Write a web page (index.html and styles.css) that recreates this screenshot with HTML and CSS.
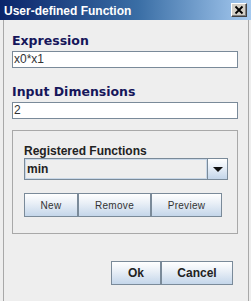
FILE: index.html
```html
<!DOCTYPE html>
<html>
<head>
<meta charset="utf-8">
<link rel="stylesheet" href="styles.css">
</head>
<body>
<div class="window">
  <div class="titlebar">
    <span class="title">User-defined Function</span>
    <span class="close">
      <svg width="14" height="12" viewBox="0 0 14 12">
        <path d="M3.5 2.5 L10.5 9.5 M10.5 2.5 L3.5 9.5" stroke="#000" stroke-width="1.8" fill="none"/>
      </svg>
    </span>
  </div>
  <div class="frame">
    <div class="label">Expression</div>
    <div class="field">x0*x1</div>
    <div class="label label-next">Input Dimensions</div>
    <div class="field">2</div>
    <div class="group">
      <div class="group-label">Registered Functions</div>
      <div class="combo">
        <span class="combo-value">min</span>
        <span class="combo-arrow"><span class="tri"></span></span>
      </div>
      <div class="btn-row">
        <button class="btn btn-small btn-new">New</button>
        <button class="btn btn-small btn-remove">Remove</button>
        <button class="btn btn-small btn-preview">Preview</button>
      </div>
    </div>
    <div class="actions">
      <button class="btn btn-main btn-ok">Ok</button>
      <button class="btn btn-main btn-cancel">Cancel</button>
    </div>
  </div>
</div>
</body>
</html>
```

FILE: styles.css
```css
html, body {
  margin: 0;
  padding: 0;
}
body {
  width: 251px;
  height: 301px;
  overflow: hidden;
  background: #eeeeee;
  font-family: "Liberation Sans", Arial, sans-serif;
}
.window {
  width: 251px;
  height: 301px;
}
.titlebar {
  height: 20px;
  box-sizing: border-box;
  padding: 0 4px 0 4px;
  background: linear-gradient(to right, #0a246a 0%, #3a6ea5 55%, #a6caf0 100%);
  display: flex;
  align-items: center;
  justify-content: space-between;
}
.title {
  color: #ffffff;
  font-weight: bold;
  font-size: 12px;
  line-height: 20px;
  padding-top: 1px;
}
.close {
  width: 16px;
  height: 14px;
  box-sizing: border-box;
  background: #d4d0c8;
  border-top: 1px solid #ffffff;
  border-left: 1px solid #ffffff;
  border-right: 1px solid #404040;
  border-bottom: 1px solid #404040;
  box-shadow: inset -1px -1px 0 #808080;
  display: flex;
}
.close svg {
  display: block;
}
.frame {
  height: 281px;
  box-sizing: border-box;
  margin: 0 2px 0 3px;
  border-left: 1px solid #a8a8a8;
  border-right: 1px solid #a8a8a8;
  padding: 13px 10px 0 8px;
}
.label {
  font-family: "DejaVu Sans", Verdana, sans-serif;
  font-weight: bold;
  font-size: 12.5px;
  line-height: 15px;
  height: 15px;
  color: #16165a;
  margin-bottom: 3px;
}
.label-next {
  margin-top: 16px;
}
.field {
  height: 17px;
  box-sizing: border-box;
  border: 1px solid #7a8a99;
  background: #ffffff;
  font-size: 12px;
  line-height: 14px;
  color: #333333;
  padding-left: 1px;
}
.group {
  margin-top: 11px;
  height: 104px;
  box-sizing: border-box;
  border: 1px solid #a8a8a8;
  padding: 13px 9px 0 11px;
}
.group-label {
  font-weight: bold;
  font-size: 12px;
  line-height: 14px;
  height: 14px;
  color: #222222;
}
.combo {
  height: 22px;
  box-sizing: border-box;
  border: 1px solid #7a8a99;
  display: flex;
}
.combo-value {
  flex: 1;
  box-shadow: inset 0 0 0 1px #c9d8e8;
  background: #eeeeee;
  font-weight: bold;
  font-size: 12px;
  line-height: 20px;
  color: #222222;
  padding-left: 2px;
}
.combo-arrow {
  width: 19px;
  border-left: 1px solid #7a8a99;
  background: linear-gradient(#ffffff 0%, #e6eef7 45%, #c3d5e9 100%);
  display: flex;
  align-items: center;
  justify-content: center;
}
.tri {
  width: 0;
  height: 0;
  border-left: 5px solid transparent;
  border-right: 5px solid transparent;
  border-top: 5px solid #111111;
}
.btn-row {
  margin-top: 13px;
  display: flex;
}
.btn {
  height: 24px;
  box-sizing: border-box;
  border: 1px solid #7a8a99;
  background: linear-gradient(#ffffff 0%, #eaf0f7 40%, #c4d6ea 100%);
  padding: 0;
  margin: 0;
  font-family: "Liberation Sans", Arial, sans-serif;
  color: #333333;
}
.btn-small {
  font-size: 10px;
  letter-spacing: 0.3px;
}
.btn-new { width: 54px; }
.btn-remove { width: 73px; }
.btn-preview { width: 71px; }
.actions {
  margin-top: 27px;
  margin-right: 5px;
  display: flex;
  justify-content: flex-end;
}
.btn-main {
  font-size: 12px;
  font-weight: bold;
  color: #222222;
}
.btn-ok { width: 50px; }
.btn-cancel { width: 72px; }
```
